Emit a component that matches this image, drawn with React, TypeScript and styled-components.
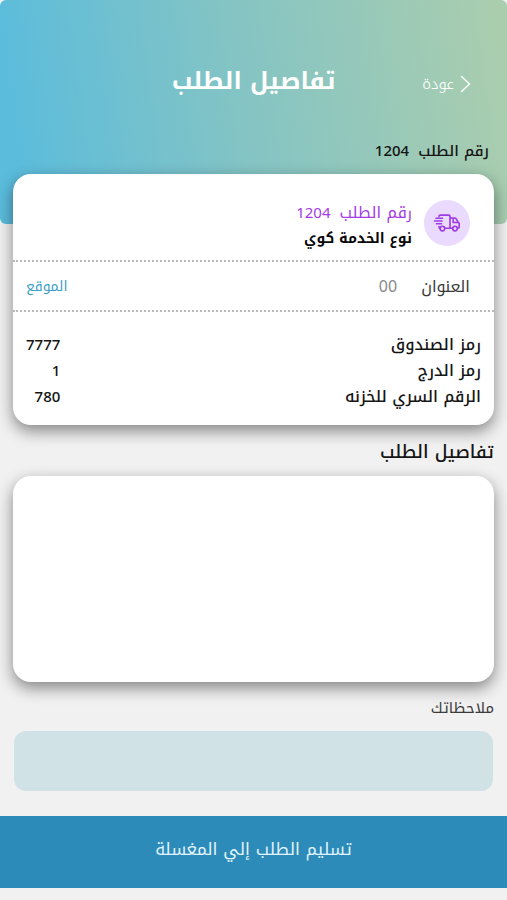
import React from 'react';
import styled, { createGlobalStyle } from 'styled-components';

const GlobalStyle = createGlobalStyle`
  *, *::before, *::after { box-sizing: border-box; }
  body {
    margin: 0;
    background: #f1f1f1;
    color: #151515;
    font-family: "Noto Kufi Arabic", "Noto Sans", "DejaVu Sans", sans-serif;
    font-size: 16px;
    line-height: 26px;
  }
  button, textarea { font: inherit; }
`;

const Page = styled.div`
  min-height: 100vh;
  display: flex;
  flex-direction: column;
  overflow-x: hidden;
`;

const Header = styled.header`
  padding: 61px 18px 60px;
  border-radius: 6px;
  background: linear-gradient(82deg, #5bbcdc 4%, #84c4c4 48%, #aacdae 98%);
`;

const TitleBar = styled.div`
  display: grid;
  grid-template-columns: 1fr auto 1fr;
  align-items: center;
  padding: 0 18px;
`;

const BackLink = styled.a`
  display: inline-flex;
  align-items: center;
  gap: 6px;
  justify-self: start;
  padding-top: 6px;
  color: #fff;
  font-size: 15px;
  font-weight: 300;
  text-decoration: none;
`;

const Title = styled.h1`
  margin: 0;
  color: #fff;
  font-size: 24px;
  font-weight: 700;
  line-height: 40px;
`;

const OrderNumber = styled.p<{ $accent?: boolean }>`
  display: flex;
  gap: 9px;
  margin: 0;
  font-size: ${({ $accent }) => ($accent ? '16px' : '15px')};
  font-weight: ${({ $accent }) => ($accent ? 400 : 500)};
  color: ${({ $accent }) => ($accent ? '#a43ce8' : '#151515')};
`;

const OrderDigits = styled.span`
  font-size: 15px;
`;

const HeaderOrder = styled.div`
  padding-top: 37px;
`;

const Main = styled.main`
  display: flex;
  flex-direction: column;
  margin-top: -50px;
  padding: 0 13px 25px;
`;

const Card = styled.section`
  border-radius: 18px;
  background: #fff;
  box-shadow: 0 6px 16px rgba(0, 0, 0, 0.45);
`;

const EmptyCard = styled(Card)`
  min-height: 206px;
`;

const Service = styled.div`
  display: flex;
  align-items: center;
  gap: 12px;
  padding: 26px 24px 8px;
`;

const IconBadge = styled.span`
  display: grid;
  place-items: center;
  align-self: flex-start;
  width: 46px;
  height: 46px;
  border-radius: 50%;
  background: #eadafd;
`;

const ServiceName = styled.p`
  margin: 0;
  color: #080808;
  font-size: 14px;
  font-weight: 700;
`;

const Address = styled.div`
  display: flex;
  align-items: center;
  gap: 24px;
  padding-block: 12px 10px;
  padding-inline: 24px 13px;
  border: dotted #b9b9bb;
  border-width: 2px 0;
  color: #3a3a3a;
`;

const AddressValue = styled.span`
  color: #8a8a8a;
`;

const LocationLink = styled.a`
  margin-inline-start: auto;
  color: #419fc6;
  font-size: 14px;
  text-decoration: none;
`;

const Codes = styled.dl`
  display: grid;
  grid-template-columns: 1fr auto;
  margin: 0;
  padding: 20px 13px 15px;
  font-weight: 500;

  dd {
    margin: 0;
    font-size: 15px;
  }
`;

const SectionTitle = styled.h2`
  margin: 14px 0 11px;
  font-size: 18px;
  font-weight: 500;
  line-height: 26px;
`;

const NotesLabel = styled.label`
  margin: 13px 0 10px;
  color: #3a3a3a;
  font-size: 15px;
`;

const Notes = styled.textarea`
  display: block;
  height: 60px;
  margin: 0 1px;
  padding: 8px 12px;
  border: 0;
  border-radius: 12px;
  background: #d1e2e7;
  resize: none;
`;

const SubmitButton = styled.button`
  width: 100%;
  min-height: 72px;
  padding: 16px 13px 22px;
  border: 0;
  background: #2c8bb8;
  color: #e2f4ff;
  font-size: 17px;
  cursor: pointer;
`;

const Chevron = () => (
  <svg width="11" height="18" viewBox="0 0 11 18" fill="none" stroke="currentColor" strokeWidth="1.4" strokeLinecap="round" aria-hidden="true">
    <path d="M1.5 1.5 9.5 9l-8 7.5" />
  </svg>
);

const Truck = () => (
  <svg width="28" height="20" viewBox="0 0 28 20" fill="none" stroke="#9c3be6" strokeWidth="1.6" strokeLinecap="round" strokeLinejoin="round" aria-hidden="true">
    <path d="M6 3.6V3.4q0-1.3 1.3-1.3h8.4q1.3 0 1.3 1.3v11.9h-5M17 5h4.7q1 0 1.5.9l2 3.3q1 .4 1 1.4v3.5q0 1.2-1.2 1.2h-.4M20.2 5.3v4.2h4.8M17 15.3h2.7M6 13.6v.5q0 1.2 1 1.2" />
    <path d="M3 5.2h6.5M1.5 8h7.5M3.5 10.8h5" />
    <circle cx="9.4" cy="15.6" r="2.3" />
    <circle cx="22" cy="15.6" r="2.3" />
  </svg>
);

const codes = [
  { label: 'رمز الصندوق', value: '7777' },
  { label: 'رمز الدرج', value: '1' },
  { label: 'الرقم السري للخزنه', value: '780' },
];

export default function App() {
  return (
    <Page dir="rtl" lang="ar">
      <GlobalStyle />
      <Header>
        <TitleBar>
          <BackLink href="#back">
            <Chevron />
            عودة
          </BackLink>
          <Title>تفاصيل الطلب</Title>
        </TitleBar>
        <HeaderOrder>
          <OrderNumber>
            <span>رقم الطلب</span>
            <OrderDigits>1204</OrderDigits>
          </OrderNumber>
        </HeaderOrder>
      </Header>
      <Main>
        <Card>
          <Service>
            <IconBadge>
              <Truck />
            </IconBadge>
            <div>
              <OrderNumber $accent>
                <span>رقم الطلب</span>
                <OrderDigits>1204</OrderDigits>
              </OrderNumber>
              <ServiceName>نوع الخدمة كوي</ServiceName>
            </div>
          </Service>
          <Address>
            <span>العنوان</span>
            <AddressValue>00</AddressValue>
            <LocationLink href="#location">الموقع</LocationLink>
          </Address>
          <Codes>
            {codes.map(({ label, value }) => (
              <React.Fragment key={label}>
                <dt>{label}</dt>
                <dd>{value}</dd>
              </React.Fragment>
            ))}
          </Codes>
        </Card>
        <SectionTitle>تفاصيل الطلب</SectionTitle>
        <EmptyCard aria-label="تفاصيل الطلب" />
        <NotesLabel htmlFor="notes">ملاحظاتك</NotesLabel>
        <Notes id="notes" />
      </Main>
      <SubmitButton type="button">تسليم الطلب إلي المغسلة</SubmitButton>
    </Page>
  );
}
